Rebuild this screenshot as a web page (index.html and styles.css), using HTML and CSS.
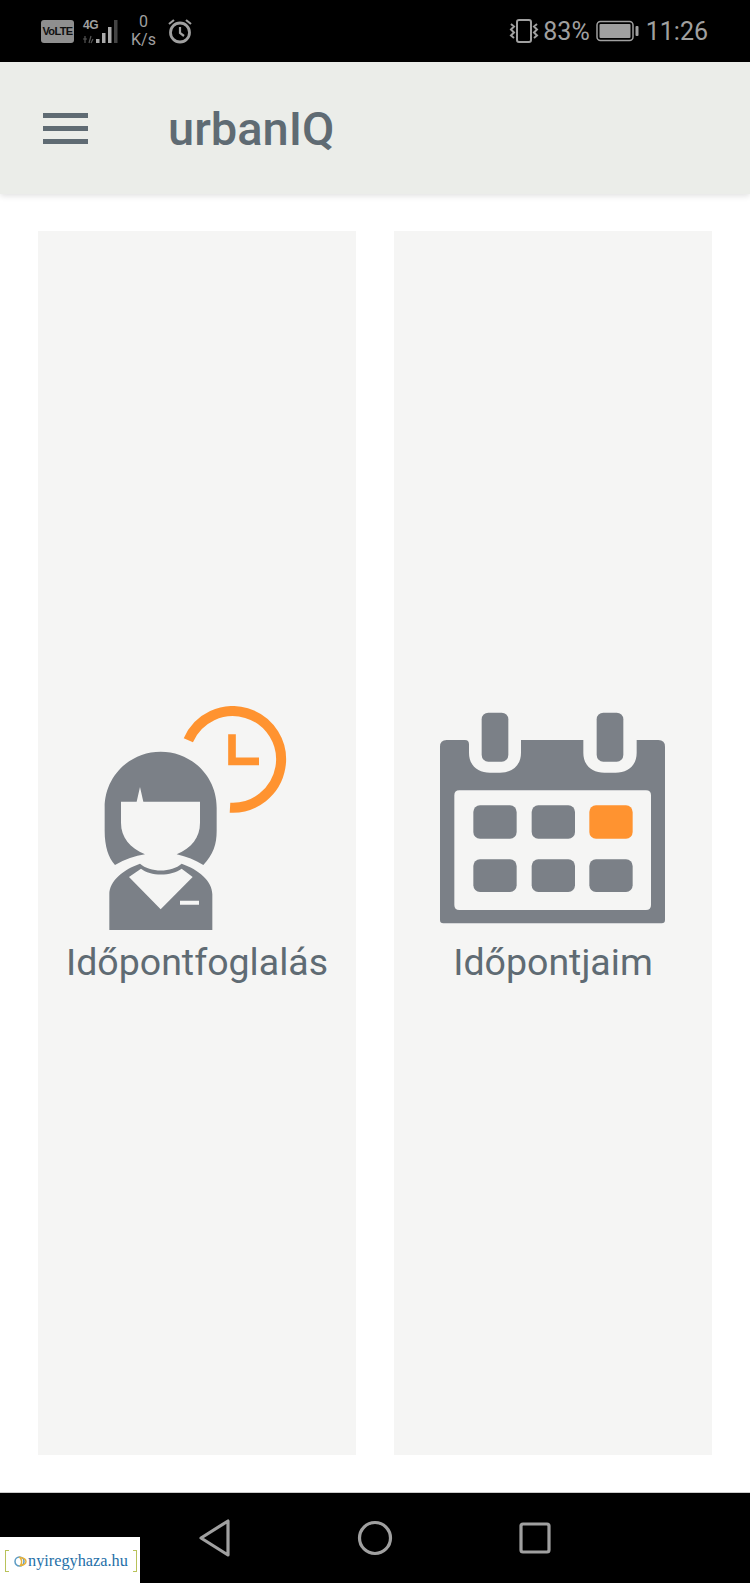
FILE: index.html
```html
<!DOCTYPE html>
<html>
<head>
    <title>urbanIQ</title>
    <link rel="stylesheet" href="styles.css">
</head>
<body>
    <div id="phone">
        <div id="statusbar">
            <div class="status-left">
                <span class="volte">VoLTE</span>
                <svg class="signal" width="38" height="26" viewBox="0 0 38 26">
                    <text x="1" y="11" class="signal-text">4G</text>
                    <path d="M1 21h4M3 18v7M9 18l-2 7M9 25l2-4" stroke="#555" stroke-width="1.200" fill="none"/>
                    <rect x="14" y="21" width="3.500" height="4" fill="#aaa"/>
                    <rect x="20" y="15" width="3.500" height="10" fill="#aaa"/>
                    <rect x="26" y="9" width="3.500" height="16" fill="#aaa"/>
                    <rect x="32" y="2" width="3.500" height="23" fill="#444"/>
                </svg>
                <div class="speed"><span>0</span><span>K/s</span></div>
                <svg width="26" height="26" viewBox="0 0 26 26" fill="none" stroke="#a0a0a0" stroke-width="2.800">
                    <circle cx="13" cy="14.500" r="9.500"/>
                    <path d="M13 9v6l4 3" stroke-width="2.200"/>
                    <path d="M2 6l5-4M24 6l-5-4" stroke-width="2.200"/>
                </svg>
            </div>
            <div class="status-right">
                <svg width="30" height="24" viewBox="0 0 30 24" fill="none" stroke="#a0a0a0" stroke-width="2">
                    <rect x="8" y="1" width="14" height="22" rx="2"/>
                    <path d="M2 5l3 2.500-3 3 3 3-3 3 3 2.500M28 5l-3 2.500 3 3-3 3 3 3-3 2.500"/>
                </svg>
                <span class="percent">83%</span>
                <svg width="44" height="22" viewBox="0 0 44 22">
                    <rect x="1" y="1.500" width="36" height="19" rx="3.500" fill="none" stroke="#a0a0a0" stroke-width="1.500"/>
                    <rect x="3.500" y="4" width="31" height="14" rx="1" fill="#a0a0a0"/>
                    <rect x="39.500" y="6" width="3" height="10" rx="1" fill="#a0a0a0"/>
                </svg>
                <span class="clock">11:26</span>
            </div>
        </div>

        <div id="header">
            <div class="menu"><span></span><span></span><span></span></div>
            <div class="title">urbanIQ</div>
        </div>

        <div id="content">
            <div class="tile">
                <svg class="tile-icon" viewBox="0 0 240 224">
                    <g transform="translate(-17 -15) scale(.33333)">
                        <path fill="#7b8087" d="M302 182C210 182 134 255 134 350V420C134 465 145 500 165 522C195 505 225 495 255 490C210 470 183 440 183 395V332H230L240 288L250 332H420V395C420 440 395 470 350 490C380 497 405 507 430 522C460 490 470 460 470 420V350C470 255 394 182 302 182Z"/>
                        <path fill="#7b8087" fill-rule="evenodd" d="M148 718V610C148 570 190 535 240 518C270 545 335 545 365 518C415 535 457 570 457 610V718ZM207 558L302 655L398 558L365 533C335 556 270 556 243 533ZM360 629V641H417V629Z"/>
                        <path fill="none" stroke="#ff9330" stroke-width="30" d="M385 148A145 145 0 1 1 510 350"/>
                        <path fill="none" stroke="#ff9330" stroke-width="23" d="M516 130V211H597"/>
                    </g>
                </svg>
                <div class="tile-label">Időpontfoglalás</div>
            </div>
            <div class="tile">
                <svg class="tile-icon" viewBox="0 0 240 224">
                    <g transform="translate(-13 -15) scale(.33333)" fill="#7b8087">
                        <path fill-rule="evenodd" d="M80 147H135Q147 147 147 160V185C147 225 175 245 210 245H240C275 245 303 225 303 185V147H490V185C490 225 518 245 553 245H587C622 245 650 225 650 185V147H715Q735 147 735 167V687Q735 697 725 697H70Q60 697 60 687V167Q60 147 80 147ZM118 298Q103 298 103 313V642Q103 657 118 657H678Q693 657 693 642V313Q693 298 678 298Z"/>
                        <rect x="185" y="65" width="80" height="147" rx="20"/>
                        <rect x="530" y="65" width="80" height="147" rx="20"/>
                        <rect x="160" y="343" width="130" height="100" rx="20"/>
                        <rect x="335" y="343" width="130" height="100" rx="20"/>
                        <rect x="508" y="343" width="130" height="100" rx="20" fill="#ff9330"/>
                        <rect x="160" y="505" width="130" height="98" rx="20"/>
                        <rect x="335" y="505" width="130" height="98" rx="20"/>
                        <rect x="508" y="505" width="130" height="98" rx="20"/>
                    </g>
                </svg>
                <div class="tile-label">Időpontjaim</div>
            </div>
        </div>

        <div id="navbar">
            <svg width="32" height="38" viewBox="0 0 32 38" fill="none" stroke="#a0a0a0" stroke-width="3.200" stroke-linejoin="round">
                <path d="M2 19L29 2V36Z"/>
            </svg>
            <svg width="36" height="36" viewBox="0 0 36 36" fill="none" stroke="#a0a0a0" stroke-width="3.200">
                <circle cx="18" cy="18" r="15.500"/>
            </svg>
            <svg width="32" height="32" viewBox="0 0 32 32" fill="none" stroke="#a0a0a0" stroke-width="3.200">
                <rect x="2" y="2" width="28" height="28" rx="2"/>
            </svg>
        </div>

        <div id="logo">
            <span class="bracket left"></span>
            <svg width="13" height="13" viewBox="0 0 13 13" fill="none" stroke-width="1.500">
                <circle cx="5.500" cy="6.500" r="4.500" stroke="#5b9bc4"/>
                <path d="M6 2.500C10 2.500 12 5 12 6.500C12 9 9 10.500 6.500 10.500C8 8 8 5 6 2.500Z" stroke="#e8b23a"/>
            </svg>
            <span class="logo-text">nyiregyhaza.hu</span>
            <span class="bracket right"></span>
        </div>
    </div>
</body>
</html>
```

FILE: styles.css
```css
body {
    margin: 0;
    font-family: Roboto, Arial, sans-serif;
    background-color: #ffffff;
}

#phone {
    position: relative;
    display: flex;
    flex-direction: column;
    width: 750px;
    height: 1583px;
    overflow: hidden;
}

#statusbar {
    display: flex;
    justify-content: space-between;
    align-items: center;
    height: 62px;
    padding: 0 42px 0 41px;
    background-color: #000000;
    color: #a0a0a0;
}

.status-left {
    display: flex;
    align-items: center;
    gap: 8px;
}

.status-right {
    display: flex;
    align-items: center;
}

.volte {
    width: 33px;
    height: 23px;
    line-height: 23px;
    border-radius: 3px;
    background-color: #8f8f8f;
    color: #111111;
    font-family: "Liberation Sans", sans-serif;
    font-size: 11px;
    font-weight: bold;
    text-align: center;
    letter-spacing: -0.6px;
}

.signal-text {
    font-family: "Liberation Sans", sans-serif;
    font-size: 12px;
    font-weight: bold;
    letter-spacing: -0.5px;
    fill: #a0a0a0;
}

.speed {
    display: flex;
    flex-direction: column;
    align-items: center;
    margin: 0 3px 0 3px;
    font-size: 16px;
    line-height: 18px;
}

.percent {
    margin: 0 6px 0 4px;
    font-size: 25px;
}

.clock {
    margin-left: 6px;
    font-size: 25px;
}

#header {
    display: flex;
    align-items: center;
    gap: 80px;
    height: 132px;
    padding-left: 43px;
    background-color: #ebede9;
    color: #5f6b73;
    box-shadow: 0 2px 6px rgba(0, 0, 0, 0.12);
    z-index: 1;
}

.menu {
    display: flex;
    flex-direction: column;
    gap: 8px;
    width: 45px;
}

.menu span {
    height: 5px;
    background-color: #5f6b73;
}

.title {
    font-size: 47px;
    font-weight: 500;
}

#content {
    flex: 1;
    display: flex;
    gap: 38px;
    padding: 37px 38px;
}

.tile {
    flex: 1;
    display: flex;
    flex-direction: column;
    align-items: center;
    justify-content: center;
    padding-top: 2px;
    background-color: #f5f5f4;
}

.tile-icon {
    width: 240px;
    height: 224px;
}

.tile-label {
    margin-top: 11px;
    color: #5f6b73;
    font-size: 37.500px;
    line-height: 42px;
}

#navbar {
    display: flex;
    justify-content: center;
    align-items: center;
    gap: 126px;
    height: 91px;
    background-color: #000000;
    border-top: 1px solid #cccccc;
    box-sizing: border-box;
}

#logo {
    position: absolute;
    left: 0;
    bottom: 0;
    display: flex;
    align-items: center;
    width: 140px;
    height: 46px;
    padding-top: 2px;
    box-sizing: border-box;
    background-color: #ffffff;
}

.bracket {
    width: 3px;
    height: 20px;
    border: 1px solid #b9c25a;
}

.bracket.left {
    margin: 0 5px;
    border-right: none;
}

.bracket.right {
    margin-left: 5px;
    border-left: none;
}

.logo-text {
    margin-left: 1px;
    color: #1f6fa8;
    font-family: "Liberation Serif", serif;
    font-size: 16.300px;
}
```
